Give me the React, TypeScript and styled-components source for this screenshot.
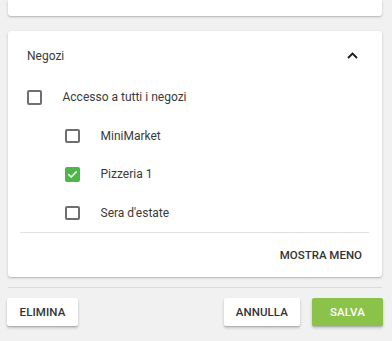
import React, { useState } from "react";
import styled, { createGlobalStyle } from "styled-components";

const Global = createGlobalStyle`
  html, body { margin: 0; padding: 0; background: #f1f1f1; }
  body { font-family: Roboto, "Liberation Sans", Arial, sans-serif; color: rgba(0,0,0,0.87); }
  * { box-sizing: border-box; }
`;

const Page = styled.div`
  width: 392px;
  height: 341px;
  overflow: hidden;
  display: flex;
  flex-direction: column;
`;

const Cards = styled.div`
  padding: 0 10px 0 8px;
  display: flex;
  flex-direction: column;
  gap: 15px;
`;

const TopCard = styled.div`
  height: 16px;
  background: #fff;
  border-radius: 0 0 3px 3px;
  box-shadow: 0 1px 3px rgba(0,0,0,0.18), 0 1px 1px rgba(0,0,0,0.10);
`;

const Card = styled.div`
  background: #fff;
  border-radius: 3px;
  box-shadow: 0 1px 3px rgba(0,0,0,0.18), 0 1px 1px rgba(0,0,0,0.10);
  padding: 0 13px 0 12px;
`;

const Header = styled.div`
  height: 47px;
  display: flex;
  align-items: center;
  justify-content: space-between;
  padding: 2px 11px 0 7px;
  font-size: 12px;
  color: #3a3a3a;
`;

const List = styled.div`
  padding-left: 7px;
  border-bottom: 1px solid #e0e0e0;
`;

const Row = styled.label<{ $indent?: boolean }>`
  height: 38.5px;
  display: flex;
  align-items: center;
  gap: 21px;
  padding-left: ${(p) => (p.$indent ? "38px" : "0")};
  font-size: 12px;
  color: #3a3a3a;
  cursor: pointer;
`;

const Box = styled.span<{ $checked?: boolean }>`
  width: 14.5px;
  height: 14.5px;
  border-radius: 2px;
  flex: none;
  display: flex;
  align-items: center;
  justify-content: center;
  border: ${(p) => (p.$checked ? "none" : "2px solid #6f6f6f")};
  background: ${(p) => (p.$checked ? "#4cb748" : "transparent")};
`;

const Footer = styled.div`
  height: 44px;
  display: flex;
  align-items: center;
  justify-content: flex-end;
  padding-right: 7px;
`;

const TextButton = styled.button`
  border: none;
  background: none;
  padding: 0;
  font-family: inherit;
  font-size: 11.5px;
  font-weight: 500;
  letter-spacing: 0;
  color: #333;
  cursor: pointer;
`;

const Rule = styled.div`
  margin: 10px 10px 0 8px;
  height: 1px;
  background: #dadada;
`;

const Actions = styled.div`
  display: flex;
  align-items: center;
  padding: 10px 9px 0 7px;
  gap: 12px;
`;

const Spacer = styled.div`
  flex: 1;
`;

const Button = styled.button<{ $primary?: boolean }>`
  height: 28px;
  min-width: 71px;
  padding: 0 12px;
  border: none;
  border-radius: 2px;
  font-family: inherit;
  font-size: 11.5px;
  font-weight: 500;
  letter-spacing: 0.1px;
  background: ${(p) => (p.$primary ? "#8bc34a" : "#fff")};
  color: ${(p) => (p.$primary ? "#fff" : "#333")};
  box-shadow: 0 2px 3px rgba(0,0,0,0.2), 0 1px 1px rgba(0,0,0,0.12);
  cursor: pointer;
`;

const Check = () => (
  <svg width="11" height="11" viewBox="0 0 24 24">
    <path d="M4 12.5l5 5L20 6.5" fill="none" stroke="#fff" strokeWidth="3.6" strokeLinecap="round" strokeLinejoin="round" />
  </svg>
);

const Chevron = () => (
  <svg width="11" height="7" viewBox="0 0 11 7">
    <path d="M1 6l4.5-4.4L10 6" fill="none" stroke="#1a1a1a" strokeWidth="1.8" />
  </svg>
);

const shops = [
  { name: "MiniMarket", checked: false },
  { name: "Pizzeria 1", checked: true },
  { name: "Sera d'estate", checked: false },
];

export default function App() {
  const [state, setState] = useState(shops.map((s) => s.checked));
  const [all, setAll] = useState(false);
  return (
    <Page>
      <Global />
      <Cards>
        <TopCard />
        <Card>
          <Header>
            <span>Negozi</span>
            <Chevron />
          </Header>
          <List>
            <Row onClick={() => setAll(!all)}>
              <Box $checked={all}>{all && <Check />}</Box>
              Accesso a tutti i negozi
            </Row>
            {shops.map((s, i) => (
              <Row
                key={s.name}
                $indent
                onClick={() => setState(state.map((v, j) => (j === i ? !v : v)))}
              >
                <Box $checked={state[i]}>{state[i] && <Check />}</Box>
                {s.name}
              </Row>
            ))}
          </List>
          <Footer>
            <TextButton>MOSTRA MENO</TextButton>
          </Footer>
        </Card>
      </Cards>
      <Rule />
      <Actions>
        <Button>ELIMINA</Button>
        <Spacer />
        <Button>ANNULLA</Button>
        <Button $primary>SALVA</Button>
      </Actions>
    </Page>
  );
}
